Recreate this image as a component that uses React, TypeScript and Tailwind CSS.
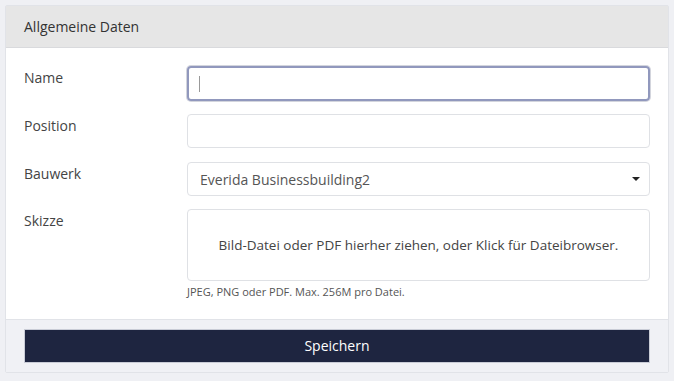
import React from "react";

export default function App() {
  const font = { fontFamily: '"Open Sans", "Liberation Sans", sans-serif' };
  return (
    <div className="min-h-screen bg-[#eff0f4] pt-[5px] pl-[5px] pr-[5px] pb-[8px]" style={font}>
      <div className="border border-[#e1e3e8] rounded-[2px] bg-white">
        <div className="h-[42px] bg-[#e6e6e6] border-b border-[#d9dadd] px-[18px] flex items-center text-[14px] text-[#333]">
          Allgemeine Daten
        </div>
        <div className="px-[18px] pt-[18px] pb-[18px] text-[14px]">
          <div className="grid grid-cols-[163px_1fr] mb-[13px]">
            <div className="pt-[1px] text-[#444]">Name</div>
            <div className="h-[35px] rounded-[4px] border-2 border-[#9198bd] shadow-[0_0_0_1px_#d3d5dd] flex items-center px-[10px]">
              <span className="w-[1px] h-[16px] bg-[#999]" />
            </div>
          </div>
          <div className="grid grid-cols-[163px_1fr] mb-[14px]">
            <div className="pt-[1px] text-[#444]">Position</div>
            <div className="h-[34px] rounded-[4px] border border-[#dfe1e5]" />
          </div>
          <div className="grid grid-cols-[163px_1fr] mb-[13px]">
            <div className="pt-[1px] text-[#444]">Bauwerk</div>
            <div className="h-[34px] rounded-[4px] border border-[#dfe1e5] flex items-center justify-between pl-[12px] pr-[8px] text-[#555]">
              <span>Everida Businessbuilding2</span>
              <svg width="10" height="6" viewBox="0 0 10 6"><path d="M1 1h8L5 5z" fill="#222" /></svg>
            </div>
          </div>
          <div className="grid grid-cols-[163px_1fr]">
            <div className="pt-[1px] text-[#444]">Skizze</div>
            <div>
              <div className="h-[72px] rounded-[4px] border border-[#dfe1e5] flex items-center justify-center text-[13.5px] text-[#444]">
                Bild-Datei oder PDF hierher ziehen, oder Klick für Dateibrowser.
              </div>
              <div className="mt-[3px] text-[11px] text-[#555]">JPEG, PNG oder PDF. Max. 256M pro Datei.</div>
            </div>
          </div>
        </div>
        <div className="border-t border-[#e1e3e8] bg-[#f0f1f5] px-[18px] py-[9px]">
          <button className="w-full h-[34px] bg-[#1e2540] border border-[#c9ccd6] text-white text-[14px]" style={font}>
            Speichern
          </button>
        </div>
      </div>
    </div>
  );
}
